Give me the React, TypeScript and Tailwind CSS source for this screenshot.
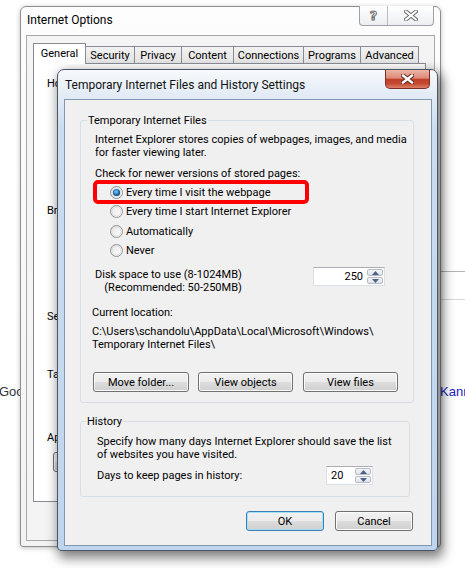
import clsx from 'clsx'
import type { ReactNode } from 'react'

// Win7 style radio
const Radio = ({ checked, label, className }: { checked?: boolean; label: string; className?: string }) => (
  <div className={clsx('flex h-[19px] items-center', className)}>
    <svg width="13" height="13" viewBox="0 0 13 13" className="mr-[3px] shrink-0">
      <defs>
        <linearGradient id="rbg" x1="0" y1="0" x2="1" y2="1">
          <stop offset="0" stopColor="#e6e6e6" />
          <stop offset="1" stopColor="#ffffff" />
        </linearGradient>
        <radialGradient id="rdot" cx="0.45" cy="0.4" r="0.6">
          <stop offset="0" stopColor="#8fd2fb" />
          <stop offset="0.55" stopColor="#2a7fc0" />
          <stop offset="1" stopColor="#0c3a63" />
        </radialGradient>
      </defs>
      <circle cx="6.5" cy="6.5" r="6" fill="url(#rbg)" stroke="#8e8f8f" />
      <circle cx="6.5" cy="6.5" r="4.6" fill="none" stroke="#d4d4d4" strokeWidth="0.8" />
      {checked && <circle cx="6.5" cy="6.5" r="3.6" fill="url(#rdot)" />}
    </svg>
    <span>{label}</span>
  </div>
)

const Btn = ({ children, className, focus }: { children: ReactNode; className?: string; focus?: boolean }) => (
  <div
    className={clsx(
      'flex h-[20px] items-center justify-center rounded-[3px] border bg-[linear-gradient(to_bottom,#f2f2f2_0%,#ebebeb_50%,#dddddd_50%,#cfcfcf_100%)]',
      focus
        ? 'border-[#3c7fb1] shadow-[inset_0_0_0_1px_#a6e0f8]'
        : 'border-[#707070] shadow-[inset_0_0_0_1px_#fbfbfb]',
      className
    )}
  >
    {children}
  </div>
)

const Arrow = ({ up }: { up?: boolean }) => (
  <div className="flex flex-1 items-center justify-center rounded-[2px] border border-[#b6bcc6] bg-[linear-gradient(to_bottom,#f4f5f7,#dfe3e9)]">
    <svg width="7" height="4" viewBox="0 0 7 4">
      <polygon points={up ? '0,4 7,4 3.5,0' : '0,0 7,0 3.5,4'} fill="#4d6189" />
    </svg>
  </div>
)

const Spin = ({ value, className, right }: { value: string; className?: string; right?: boolean }) => (
  <div className={clsx('flex border border-[#dbdfe6] border-t-[#abadb3] bg-white', className)}>
    <div className={clsx('flex flex-1 items-center', right ? 'justify-end pr-[4px]' : 'pl-[4px]')}>{value}</div>
    <div className="flex w-[17px] flex-col gap-[1px] py-[1px] pr-[1px]">
      <Arrow up />
      <Arrow />
    </div>
  </div>
)

export default function App() {
  return (
    <div className="relative h-[568px] w-[465px] overflow-hidden whitespace-nowrap bg-white font-[family-name:Roboto,sans-serif] text-[11px] leading-[13px] text-black">
      {/* web page behind the windows */}
      <div className="absolute left-[-1px] top-[385px] font-[family-name:'Liberation_Sans',sans-serif] text-[13px] text-[#333]">Google</div>
      <div className="absolute left-[441px] top-[271px] h-px w-[24px] bg-[#b4b4b4]" />
      <div className="absolute left-[441px] top-[299px] h-px w-[24px] bg-[#d8d8d8]" />
      <div className="absolute left-[440px] top-[385px] font-[family-name:'Liberation_Sans',sans-serif] text-[13px] text-[#2323c8]">Kann</div>

      {/* Internet Options window */}
      <div className="absolute left-[20px] top-[6px] flex h-[541px] w-[421px] flex-col rounded-t-[6px] rounded-b-[3px] border border-[#8e8e8e] bg-[linear-gradient(to_bottom,#fdfdfd,#f3f3f3)] px-[5px] pb-[5px] shadow-[0_1px_5px_rgba(0,0,0,0.25)]">
        <div className="relative h-[28px] shrink-0">
          <div className="pl-[1px] pt-[6px] text-[12px] leading-[14px]">Internet Options</div>
          <div className="absolute right-[1px] top-[-1px] flex h-[20px] w-[75px] rounded-b-[4px] border border-t-0 border-[#9ea3aa] bg-[linear-gradient(to_bottom,#ffffff,#eceef1)]">
            <div className="flex w-[28px] items-center justify-center border-r border-[#b9bdc3] font-[family-name:'DejaVu_Sans',sans-serif] text-[13px] font-bold text-transparent [-webkit-text-stroke:1px_#6a6a6a]">?</div>
            <div className="flex flex-1 items-center justify-center">
              <svg width="14" height="11" viewBox="0 0 14 11">
                <path d="M2 1.5 L12 9.5 M12 1.5 L2 9.5" stroke="#6a6a6a" strokeWidth="4" strokeLinecap="square" />
                <path d="M2 1.5 L12 9.5 M12 1.5 L2 9.5" stroke="#ffffff" strokeWidth="2" strokeLinecap="square" />
              </svg>
            </div>
          </div>
        </div>
        <div className="flex flex-1 flex-col border border-[#a8a8a8] bg-[#f4f4f4] px-[6px] pt-[7px]">
          {/* tabs */}
          <div className="flex h-[20px] items-end">
            <div className="relative z-10 -mb-px flex h-[21px] w-[53px] justify-center border border-b-0 border-[#898c95] bg-white pt-[3px]">General</div>
            <div className="-ml-px flex h-[17px] w-[50px] items-center justify-center border border-b-0 border-[#898c95] bg-[linear-gradient(to_bottom,#f2f2f2,#e3e3e3)]">Security</div>
            <div className="-ml-px flex h-[17px] w-[48px] items-center justify-center border border-b-0 border-[#898c95] bg-[linear-gradient(to_bottom,#f2f2f2,#e3e3e3)]">Privacy</div>
            <div className="-ml-px flex h-[17px] w-[53px] items-center justify-center border border-b-0 border-[#898c95] bg-[linear-gradient(to_bottom,#f2f2f2,#e3e3e3)]">Content</div>
            <div className="-ml-px flex h-[17px] w-[71px] items-center justify-center border border-b-0 border-[#898c95] bg-[linear-gradient(to_bottom,#f2f2f2,#e3e3e3)]">Connections</div>
            <div className="-ml-px flex h-[17px] w-[58px] items-center justify-center border border-b-0 border-[#898c95] bg-[linear-gradient(to_bottom,#f2f2f2,#e3e3e3)]">Programs</div>
            <div className="-ml-px flex h-[17px] w-[59px] items-center justify-center border border-b-0 border-[#898c95] bg-[linear-gradient(to_bottom,#f2f2f2,#e3e3e3)]">Advanced</div>
          </div>
          {/* General tab page; the dialog on top hides all but its left edge */}
          <div className="flex h-[439px] w-[393px] flex-col border border-[#898c95] bg-white pl-[13px]">
            <div className="mt-[13px]">Home page</div>
            <div className="mt-[114px]">Browsing history</div>
            <div className="mt-[93px]">Search</div>
            <div className="mt-[45px]">Tabs</div>
            <div className="mt-[50px]">Appearance</div>
            <Btn className="ml-[6px] mt-[8px] w-[75px]">Colors</Btn>
          </div>
        </div>
      </div>

      {/* Temporary Internet Files and History Settings dialog */}
      <div className="absolute left-[57px] top-[69px] flex h-[482px] w-[381px] flex-col rounded-t-[7px] rounded-b-[4px] border border-[#4a5666] bg-[linear-gradient(to_bottom,#f7f9fc_0px,#e3ecf6_24px,#cadcf0_60px,#bfd5ed_100%)] shadow-[3px_5px_12px_2px_rgba(0,0,0,0.5)]">
        <div className="relative h-[29px] shrink-0">
          <div className="pl-[7px] pt-[8px] text-[12px] leading-[14px] text-[#111]">Temporary Internet Files and History Settings</div>
          <div className="absolute right-[7px] top-0 flex h-[19px] w-[45px] items-center justify-center rounded-b-[5px] border border-t-0 border-[#7b2e24] bg-[linear-gradient(to_bottom,#ecb5a7_0%,#dc8a76_45%,#c0402a_52%,#c54932_75%,#de7f66_100%)]">
            <svg width="13" height="10" viewBox="0 0 13 10">
              <path d="M2 1.5 L11 8.5 M11 1.5 L2 8.5" stroke="#5a2620" strokeWidth="4.4" strokeLinecap="square" />
              <path d="M2 1.5 L11 8.5 M11 1.5 L2 8.5" stroke="#ffffff" strokeWidth="2.4" strokeLinecap="square" />
            </svg>
          </div>
        </div>
        <div className="mb-[4px] ml-[6px] mr-[5px] flex flex-1 flex-col border border-[#8296ad] bg-[#f0f0f0]">
          <fieldset className="ml-[15px] mr-[17px] mt-[14px] min-w-0 rounded-[3px] border border-[#d5dfe5] px-[14px] pb-[10px] pt-[6px]">
            <legend className="-ml-[8px] px-[1px]">Temporary Internet Files</legend>
            <div>Internet Explorer stores copies of webpages, images, and media</div>
            <div>for faster viewing later.</div>
            <div className="mt-[8px]">Check for newer versions of stored pages:</div>
            <div className="ml-[15px] mt-[3px]">
              <Radio checked label="Every time I visit the webpage" />
              <Radio label="Every time I start Internet Explorer" />
              <Radio className="mt-[1px]" label="Automatically" />
              <Radio label="Never" />
            </div>
            <div className="mt-[8px] flex items-start">
              <div className="text-right">
                <div>Disk space to use (8-1024MB)</div>
                <div>(Recommended: 50-250MB)</div>
              </div>
              <Spin value="250" right className="-mt-px ml-auto mr-[14px] h-[19px] w-[72px]" />
            </div>
            <div className="-ml-[3px] mt-[12px]">Current location:</div>
            <div className="-ml-[3px] mt-[6px]">
              <div>C:\Users\schandolu\AppData\Local\Microsoft\Windows\</div>
              <div>Temporary Internet Files\</div>
            </div>
            <div className="-ml-[2px] mt-[21px] flex">
              <Btn className="w-[96px]">Move folder...</Btn>
              <Btn className="ml-[9px] w-[95px]">View objects</Btn>
              <Btn className="ml-[10px] w-[95px]">View files</Btn>
            </div>
          </fieldset>

          <fieldset className="ml-[15px] mr-[21px] mt-[12px] min-w-0 rounded-[3px] border border-[#d5dfe5] px-[16px] pb-[11px] pt-[7px]">
            <legend className="-ml-[11px] px-[1px]">History</legend>
            <div>Specify how many days Internet Explorer should save the list</div>
            <div>of websites you have visited.</div>
            <div className="mt-[5px] flex h-[19px] items-center">
              <div>Days to keep pages in history:</div>
              <Spin value="20" className="ml-auto mr-[20px] h-[19px] w-[47px]" />
            </div>
          </fieldset>

          <div className="mr-[18px] mt-[14px] flex justify-end">
            <Btn focus className="w-[78px]">OK</Btn>
            <Btn className="ml-[11px] w-[78px]">Cancel</Btn>
          </div>
        </div>
      </div>

      {/* red highlight drawn over the screenshot */}
      <div className="absolute left-[93px] top-[180px] h-[24px] w-[216px] rounded-[5px] border-[4px] border-[#ff0000]" />
    </div>
  )
}
